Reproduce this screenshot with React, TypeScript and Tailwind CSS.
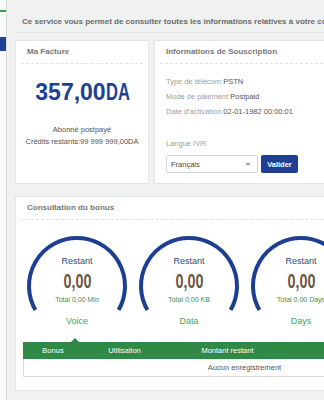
import React from "react";

function CardHead({ title, tall }: { title: string; tall?: boolean }) {
  return (
    <div
      className={
        (tall ? "h-[24px] " : "h-[23px] ") +
        "mx-[5px] border-b border-dashed border-[#dfe2e0] flex items-center pl-[6px] text-[8px] font-bold text-[#777]"
      }
    >
      {title}
    </div>
  );
}

function Gauge({ unit, label }: { unit: string; label: string }) {
  return (
    <div className="relative w-[112px] h-[104px] flex-none flex flex-col items-center">
      <svg className="absolute left-[4px] top-0" width="104" height="104" viewBox="0 0 104 104">
        <path d="M 10.43 76 A 48 48 0 1 1 93.57 76" fill="none" stroke="#1d3e91" strokeWidth="4" />
      </svg>
      <div className="mt-[22px] text-[9px] leading-[11px] text-[#2d4b87]">Restant</div>
      <div className="mt-[4px] h-[20px] text-[20px] leading-[20px] font-bold text-[#6b5842]">
        <span className="inline-block scale-x-[0.72]">0,00</span>
      </div>
      <div className="mt-[4px] text-[7px] leading-[9px] text-[#3d8f4d]">Total 0,00 {unit}</div>
      <div className="mt-[12px] text-[9px] leading-[11px] text-[#4aa35a]">{label}</div>
    </div>
  );
}

export default function App() {
  return (
    <div className="w-[324px] h-[400px] overflow-hidden flex bg-[#f0f2f1] font-['Liberation_Sans',Arial,sans-serif]">
      {/* sidebar strip */}
      <div className="w-[7px] flex-none bg-[#f8f8f8] border-r border-[#dcdcdc] flex flex-col">
        <div className="mt-[10px] h-[2px] bg-[#3c9a50]" />
        <div className="mt-[25px] h-[14px] bg-[#1e3f94]" />
      </div>

      <div className="w-[480px] flex-none pl-[8px]">
        <div className="h-[33px] pt-[17px] pl-[7px] border-b border-[#e3e6e4] text-[8px] leading-[10px] font-bold text-[#6b6b6b] whitespace-nowrap">
          Ce service vous permet de consulter toutes les informations relatives à votre compte
        </div>

        <div className="mt-[7px] flex gap-[5px]">
          {/* Ma Facture */}
          <div className="w-[134px] h-[144px] bg-white border border-[#e4e6e5]">
            <CardHead title="Ma Facture" />
            <div className="mt-[17px] text-center h-[23px] leading-[23px] whitespace-nowrap text-[#1e3f94] font-bold text-[23px]">
              <span>357,00</span>
              <span className="inline-block w-[23px] text-left">
                <span className="inline-block origin-left scale-x-[0.72]">DA</span>
              </span>
            </div>
            <div className="mt-[20px] text-center text-[7.5px] leading-[11.5px] text-[#555]">
              <div>Abonné postpayé</div>
              <div>Crédits restants:99 999 999,00DA</div>
            </div>
          </div>

          {/* Informations de Souscription */}
          <div className="w-[320px] h-[144px] bg-white border border-[#e4e6e5]">
            <CardHead title="Informations de Souscription" />
            <div className="pl-[11px] pt-[10px] text-[7.5px] leading-[15px] whitespace-nowrap">
              <div>
                <span className="text-[#a0a0a0]">Type de télécom:</span>
                <span className="text-[#555]">PSTN</span>
              </div>
              <div>
                <span className="text-[#a0a0a0]">Mode de paiement:</span>
                <span className="text-[#555]">Postpaid</span>
              </div>
              <div>
                <span className="text-[#a0a0a0]">Date d'activation:</span>
                <span className="text-[#555]">02-01-1982 00:00:01</span>
              </div>
              <div className="mt-[17px] text-[#a0a0a0]">Langue IVR:</div>
              <div className="mt-[4px] flex gap-[3px]">
                <div className="w-[92px] h-[18px] bg-white border border-[#d6d6d6] rounded-[2px] flex items-center justify-between pl-[4px] pr-[6px] text-[#444]">
                  <span>Français</span>
                  <span className="w-0 h-0 border-l-[3px] border-r-[3px] border-t-[3px] border-l-transparent border-r-transparent border-t-[#aaa]" />
                </div>
                <div className="w-[37px] h-[18px] bg-[#1e3f94] rounded-[2px] flex items-center justify-center text-white font-bold">
                  Valider
                </div>
              </div>
            </div>
          </div>
        </div>

        {/* Consultation du bonus */}
        <div className="mt-[12px] w-[459px] bg-white border border-[#e4e6e5] pb-[13px]">
          <CardHead title="Consultation du bonus" />
          <div className="mt-[14px] pl-[5px] flex">
            <Gauge unit="Min" label="Voice" />
            <Gauge unit="KB" label="Data" />
            <Gauge unit="Days" label="Days" />
            <Gauge unit="DA" label="Money" />
          </div>
          <div className="mx-[7px]">
            <div className="ml-[48px] w-0 h-0 border-l-[4px] border-r-[4px] border-b-[4px] border-l-transparent border-r-transparent border-b-[#2f8a46]" />
            <div className="h-[17px] bg-[#2f8a46] flex items-center text-[7.5px] text-white whitespace-nowrap">
              <div className="w-[60px] text-center">Bonus</div>
              <div className="w-[83px] text-center">Utilisation</div>
              <div className="w-[123px] text-center">Montant restant</div>
            </div>
            <div className="h-[18px] border border-t-0 border-[#dcdcdc] flex items-center justify-center text-[7.5px] text-[#555]">
              Aucun enregistrement
            </div>
          </div>
        </div>
      </div>
    </div>
  );
}
